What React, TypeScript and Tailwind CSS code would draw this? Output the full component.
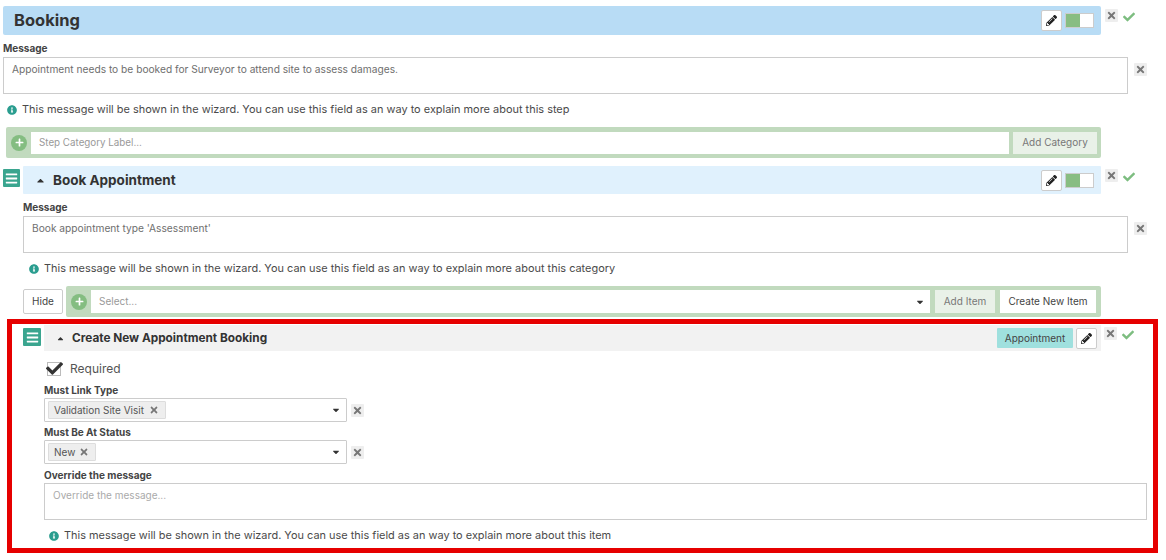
import { FaBars, FaCaretDown, FaCaretUp, FaCheck, FaInfoCircle, FaPencilAlt, FaPlus, FaTimes } from "react-icons/fa";

function RemoveButton({ className = "" }: { className?: string }) {
  return (
    <span className={"flex h-[13px] w-[13px] shrink-0 items-center justify-center rounded-[1px] bg-[#eeeeee] text-[#777777] " + className}>
      <FaTimes className="text-[11px]" />
    </span>
  );
}

function EditButton() {
  return (
    <span className="flex h-[21px] w-[21px] items-center justify-center rounded-[2px] border border-[#cccccc] bg-white text-[#222222]">
      <FaPencilAlt className="text-[11px]" />
    </span>
  );
}

function Toggle() {
  return (
    <span className="flex h-[15px] w-[29px] border border-[#cccccc] bg-white">
      <span className="w-[14px] bg-[#88bd82]" />
    </span>
  );
}

function Handle({ width = "w-[18px]" }: { width?: string }) {
  return (
    <span className={"flex h-[18px] shrink-0 items-center justify-center rounded-[1px] bg-[#3aa58f] text-white " + width}>
      <FaBars className="text-[13px]" />
    </span>
  );
}

function PlusCircle() {
  return (
    <span className="flex h-[16px] w-[16px] shrink-0 items-center justify-center rounded-full bg-[#84bd81] text-white">
      <FaPlus className="text-[9px]" />
    </span>
  );
}

function Info({ children, className = "" }: { children: string; className?: string }) {
  return (
    <div className={"flex items-center text-[10.95px] leading-4 text-[#4a4a4a] " + className}>
      <FaInfoCircle className="mr-[5px] mt-[2px] h-[10px] w-[10px] text-[#2a9d8f]" />
      <span>{children}</span>
    </div>
  );
}

function Label({ children, className = "" }: { children: string; className?: string }) {
  return <div className={"text-[10px] font-bold leading-3 text-[#444444] " + className}>{children}</div>;
}

function TagSelect({ tag, tagWidth }: { tag: string; tagWidth: string }) {
  return (
    <div className="flex items-center">
      <div className="flex h-[24px] w-[303px] items-center justify-between rounded-[1px] border border-[#cccccc] bg-white pl-[3px] pr-[5px]">
        <span className={"flex h-[18px] items-center justify-between rounded-[1px] border border-[#dddddd] bg-[#eeeeee] pl-[5px] pr-[6px] text-[10px] text-[#555555] " + tagWidth}>
          {tag}
          <FaTimes className="text-[10px] text-[#777777]" />
        </span>
        <FaCaretDown className="text-[10px] text-[#333333]" />
      </div>
      <RemoveButton className="ml-[4px]" />
    </div>
  );
}

export default function App() {
  return (
    <div className="h-[560px] w-[1166px] overflow-hidden bg-white pt-[6px] pl-[3px] font-['Inter','Liberation_Sans',sans-serif] text-[#333333]">
      <div className="flex items-start">
        <div className="flex h-[29px] w-[1098px] items-center justify-between rounded-[2px] bg-[#b8dcf5] pl-[11px] pr-[7px]">
          <h1 className="text-[16.5px] font-bold text-[#333333]">Booking</h1>
          <div className="flex items-center gap-[3px]">
            <EditButton />
            <Toggle />
          </div>
        </div>
        <RemoveButton className="ml-[4px] mt-[3px]" />
        <FaCheck className="ml-[5px] mt-[5px] text-[12px] text-[#7dbd80]" />
      </div>

      <Label className="mt-[7px]">Message</Label>
      <div className="mt-[3px] flex items-start">
        <div className="h-[37px] w-[1125px] border border-[#cccccc] px-2 py-[5px] text-[10.2px] leading-3 text-[#6e6e6e]">
          Appointment needs to be booked for Surveyor to attend site to assess damages.
        </div>
        <RemoveButton className="ml-[6px] mt-[6px]" />
      </div>
      <Info className="ml-[4px] mt-[7px]">This message will be shown in the wizard. You can use this field as an way to explain more about this step</Info>

      <div className="ml-[3px] mt-[10px] flex h-[31px] w-[1095px] items-center rounded-[2px] bg-[#c1dabe] pl-[5px] pr-[4px]">
        <PlusCircle />
        <div className="ml-[4px] flex h-[22px] w-[978px] items-center bg-white pl-2 pt-[1px] text-[9.8px] text-[#999999]">Step Category Label...</div>
        <span className="ml-[4px] flex h-[22px] w-[84px] items-center justify-center bg-[#e9f1e8] text-[10px] text-[#777777]">Add Category</span>
      </div>

      <div className="mt-[11px] flex items-start">
        <Handle width="w-[17px]" />
        <div className="ml-[3px] mt-[-3px] flex h-[28px] w-[1078px] items-center rounded-[1px] bg-[#e0f1fd] pl-[12px] pr-[7px]">
          <FaCaretUp className="text-[11px] text-[#333333]" />
          <span className="ml-[7px] text-[13.5px] font-bold">Book Appointment</span>
          <div className="ml-auto flex items-center gap-[3px]">
            <EditButton />
            <Toggle />
          </div>
        </div>
        <RemoveButton className="ml-[4px]" />
        <FaCheck className="ml-[5px] mt-[2px] text-[12px] text-[#7dbd80]" />
      </div>

      <div className="ml-[20px]">
        <Label className="mt-[7px]">Message</Label>
        <div className="mt-[3px] flex items-start">
          <div className="h-[37px] w-[1105px] border border-[#cccccc] px-2 py-[5px] text-[10.2px] leading-3 text-[#6e6e6e]">
            Book appointment type 'Assessment'
          </div>
          <RemoveButton className="ml-[6px] mt-[6px]" />
        </div>
        <Info className="ml-[6px] mt-[7px]">This message will be shown in the wizard. You can use this field as an way to explain more about this category</Info>
        <div className="mt-[10px] flex items-center">
          <span className="flex h-[25px] w-[40px] items-center justify-center rounded-[2px] border border-[#cccccc] bg-white text-[10px] text-[#444444]">Hide</span>
          <div className="ml-[3px] flex h-[31px] w-[1035px] items-center rounded-[2px] bg-[#c1dabe] pl-[5px] pr-[5px]">
            <PlusCircle />
            <div className="ml-[4px] flex h-[23px] w-[839px] items-center justify-between bg-white pl-2 pr-[5px] text-[10px] text-[#999999]">
              Select...
              <FaCaretDown className="text-[10px] text-[#333333]" />
            </div>
            <span className="ml-[5px] flex h-[23px] w-[60px] items-center justify-center bg-[#e9f1e8] text-[10px] text-[#777777]">Add Item</span>
            <span className="ml-[5px] flex h-[23px] w-[96px] items-center justify-center bg-white text-[10px] text-[#444444]">Create New Item</span>
          </div>
        </div>
      </div>

      <div className="ml-[4px] mt-[2px] h-[234px] w-[1151px] border-[5px] border-[#e60000] pl-[11px]">
        <div className="flex items-start pt-[1px]">
          <div className="mt-[3px]"><Handle /></div>
          <div className="ml-[3px] flex h-[26px] w-[1057px] items-center bg-[#f2f2f2] pl-[12px] pr-[4px]">
            <FaCaretUp className="text-[9px] text-[#333333]" />
            <span className="ml-[7px] pt-[1px] text-[11.8px] font-bold">Create New Appointment Booking</span>
            <span className="ml-auto flex h-[20px] w-[76px] items-center justify-center rounded-[1px] bg-[#9fe0de] text-[10px] text-[#444444]">Appointment</span>
            <span className="ml-[3px]"><EditButton /></span>
          </div>
          <RemoveButton className="ml-[3px] mt-[2px]" />
          <FaCheck className="ml-[5px] mt-[4px] text-[12px] text-[#7dbd80]" />
        </div>

        <div className="ml-[21px]">
          <div className="ml-[3px] mt-[10px] flex items-center">
            <span className="relative h-[14px] w-[14px] border border-[#bbbbbb] bg-white">
              <FaCheck className="absolute left-[-2px] top-[-3px] text-[17px] text-[#333333]" />
            </span>
            <span className="ml-[9px] text-[12px] leading-4 text-[#555555]">Required</span>
          </div>
          <Label className="mt-[7px]">Must Link Type</Label>
          <div className="mt-[2px]"><TagSelect tag="Validation Site Visit" tagWidth="w-[118px]" /></div>
          <Label className="mt-[4px]">Must Be At Status</Label>
          <div className="mt-[2px]"><TagSelect tag="New" tagWidth="w-[48px]" /></div>
          <Label className="mt-[5px]">Override the message</Label>
          <div className="mt-[2px] h-[37px] w-[1103px] border border-[#cccccc] px-2 py-[5px] text-[10px] leading-3 text-[#aaaaaa]">Override the message...</div>
          <Info className="ml-[5px] mt-[7px]">This message will be shown in the wizard. You can use this field as an way to explain more about this item</Info>
        </div>
      </div>
    </div>
  );
}
